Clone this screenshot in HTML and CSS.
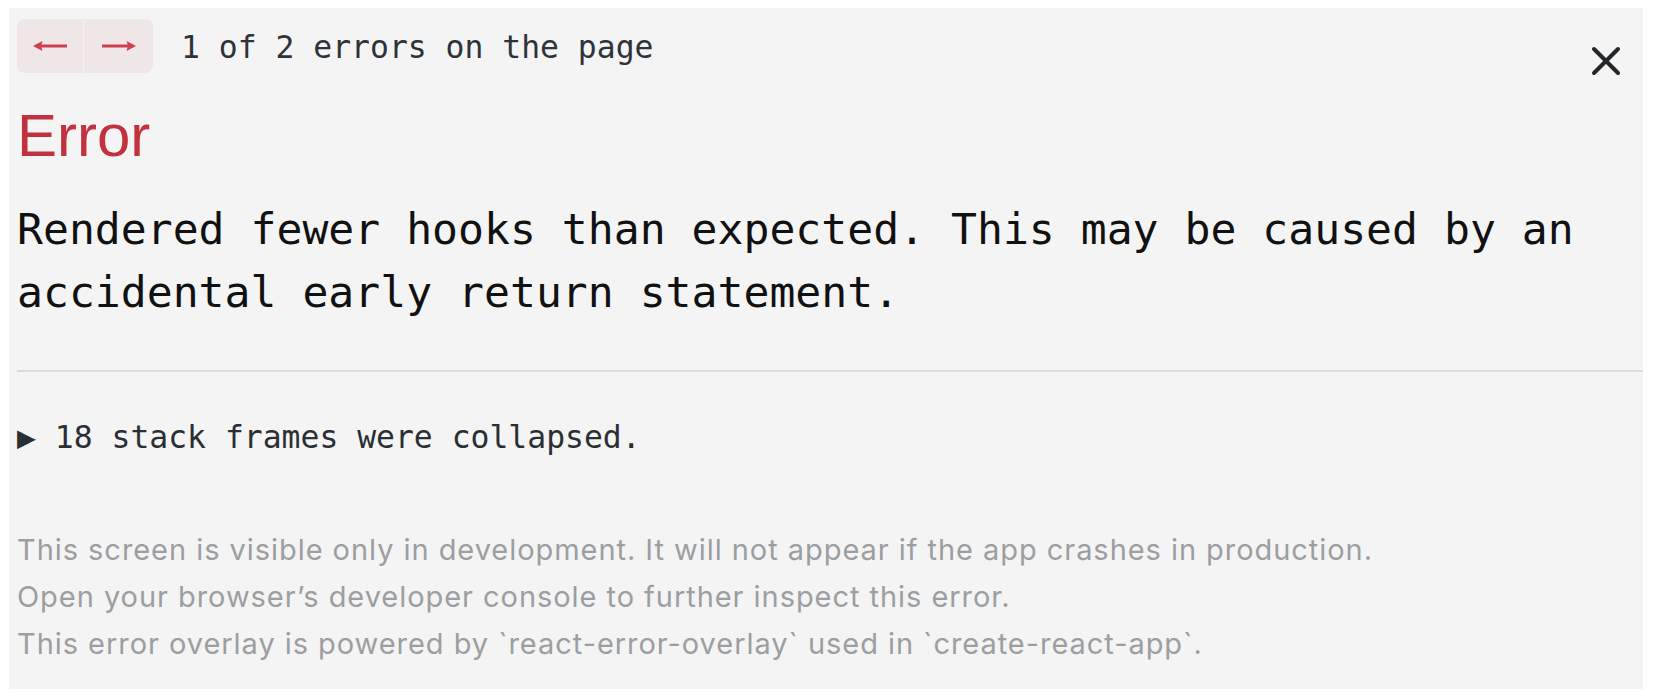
FILE: index.html
```html
<!DOCTYPE html>
<html>
<head>
<meta charset="utf-8">
<link rel="stylesheet" href="styles.css">
</head>
<body>
<div class="overlay">
  <div class="header">
    <div class="nav">
      <button class="nav-btn nav-prev" aria-label="previous">
        <svg width="36" height="16" viewBox="0 0 36 16"><path d="M35 8H4" stroke="#cf3f4d" stroke-width="2.8" fill="none"/><path d="M1 8L10.5 3L9 8L10.5 13Z" fill="#cf3f4d"/></svg>
      </button>
      <button class="nav-btn nav-next" aria-label="next">
        <svg width="36" height="16" viewBox="0 0 36 16"><path d="M1 8H32" stroke="#cf3f4d" stroke-width="2.8" fill="none"/><path d="M35 8L25.5 3L27 8L25.5 13Z" fill="#cf3f4d"/></svg>
      </button>
    </div>
    <span class="count">1 of 2 errors on the page</span>
  </div>
  <button class="close" aria-label="close">
    <svg width="30" height="30" viewBox="0 0 30 30"><path d="M3 3L27 27M27 3L3 27" stroke="#23262a" stroke-width="4" stroke-linecap="round"/></svg>
  </button>
  <h1 class="title">Error</h1>
  <div class="message">Rendered fewer hooks than expected. This may be caused by an accidental early return statement.</div>
  <hr class="divider">
  <div class="frames">▶ 18 stack frames were collapsed.</div>
  <div class="footer">
    <div>This screen is visible only in development. It will not appear if the app crashes in production.</div>
    <div>Open your browser’s developer console to further inspect this error.</div>
    <div>This error overlay is powered by `react-error-overlay` used in `create-react-app`.</div>
  </div>
</div>
</body>
</html>
```
FILE: styles.css
```css
html, body {
  margin: 0;
  padding: 0;
  background: #ffffff;
}
body {
  width: 1656px;
  height: 698px;
  overflow: hidden;
}
.overlay {
  position: relative;
  box-sizing: border-box;
  margin: 8px 0 0 9px;
  width: 1634px;
  height: 681px;
  background: #f4f4f4;
  padding: 11px 0 0 8px;
  font-family: "DejaVu Sans Mono", monospace;
}
.header {
  display: flex;
  align-items: center;
  height: 54px;
}
.nav {
  display: flex;
  border-radius: 8px;
  overflow: hidden;
}
.nav-btn {
  display: flex;
  align-items: center;
  justify-content: center;
  height: 54px;
  padding: 0;
  border: none;
  background: #efe6e7;
  cursor: pointer;
}
.nav-prev {
  border-right: 1px solid #f6f2f2;
  width: 67px;
}
.nav-next {
  width: 69px;
}
.count {
  margin-left: 28px;
  font-size: 31.4px;
  color: #2f3338;
  position: relative;
  top: 1px;
}
.close {
  position: absolute;
  top: 38px;
  right: 22px;
  padding: 0;
  border: none;
  background: none;
  width: 30px;
  height: 30px;
}
.title {
  margin: 29px 0 0 0;
  font-family: "Liberation Sans", Arial, sans-serif;
  font-weight: normal;
  font-size: 60px;
  line-height: 68px;
  color: #c2313e;
}
.message {
  margin-top: 28px;
  font-size: 43.1px;
  line-height: 63px;
  color: #111;
}
.divider {
  margin: 46px 0 0 0;
  border: none;
  height: 2px;
  background: #dcdcdc;
}
.frames {
  margin-top: 45px;
  font-size: 31.4px;
  line-height: 40px;
  color: #2b2f33;
}
.footer {
  margin-top: 69px;
  font-family: Inter, "Liberation Sans", Arial, sans-serif;
  font-size: 29px;
  line-height: 47px;
  letter-spacing: 0.95px;
  color: #9c9ea1;
}
```
